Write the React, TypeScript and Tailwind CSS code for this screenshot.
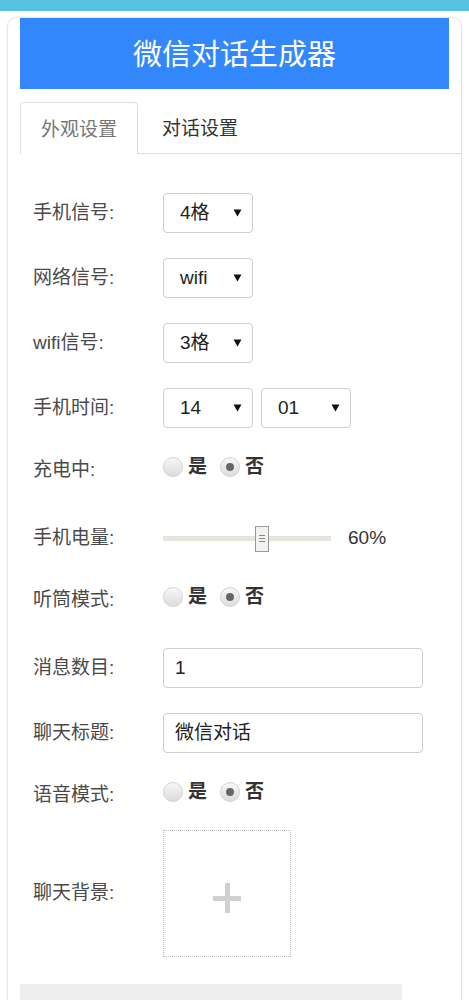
import React from 'react'

const font = { fontFamily: '"Liberation Sans", "Noto Sans CJK SC", sans-serif' }

function Arrow() {
  return (
    <svg width="9" height="8" viewBox="0 0 9 8" className="shrink-0">
      <path d="M0.5 0.5 H8.5 L4.5 7.5 Z" fill="#111" />
    </svg>
  )
}

function Select({ value }: { value: string }) {
  return (
    <div className="flex h-[40px] w-[90px] items-center justify-between rounded-[4px] border border-[#cfcfcf] bg-white pl-[16px] pr-[10px] text-[19px] text-[#222]">
      <span>{value}</span>
      <Arrow />
    </div>
  )
}

function Radio({ checked, label }: { checked?: boolean; label: string }) {
  return (
    <div className="flex items-center gap-[5px]">
      <span className="flex h-[20px] w-[20px] items-center justify-center rounded-full border border-[#d2d2d2] bg-gradient-to-b from-[#f7f7f7] to-[#dcdcdc]">
        {checked && <span className="h-[8px] w-[8px] rounded-full bg-[#666]" />}
      </span>
      <span className="text-[19px] font-bold text-[#333]">{label}</span>
    </div>
  )
}

function RadioPair() {
  return (
    <div className="mb-[6px] flex items-center gap-[13px]">
      <Radio label="是" />
      <Radio checked label="否" />
    </div>
  )
}

function Row({
  label,
  className,
  children,
}: {
  label: string
  className?: string
  children: React.ReactNode
}) {
  return (
    <div className={`flex items-center ${className ?? ''}`}>
      <div className="w-[130px] shrink-0 text-[19px] text-[#4a4a4a]">{label}</div>
      {children}
    </div>
  )
}

export default function App() {
  return (
    <div className="min-h-screen bg-white" style={font}>
      <div className="h-[11px] bg-[#56c3e3]" />

      <div className="ml-[7px] mt-[6px] w-[455px] rounded-[10px] border border-[#e6e6e6] px-[12px] shadow-[0_0_3px_rgba(0,0,0,0.06)]">
        <div className="flex h-[71px] items-center justify-center bg-[#3387fc] pt-[5px] text-[29px] text-white">
          微信对话生成器
        </div>

        {/* 选项卡 */}
        <div className="-mr-[12px] mt-[13px] flex h-[52px] border-b border-[#dddddd]">
          <div className="-mb-px flex h-[52px] items-center rounded-t-[4px] border border-b-0 border-[#dddddd] bg-white px-[20px] pt-[3px] text-[19px] text-[#777]">
            外观设置
          </div>
          <div className="ml-[4px] flex items-center px-[20px] pt-[3px] text-[19px] text-[#333]">
            对话设置
          </div>
        </div>

        <div className="pl-[13px] pt-[39px]">
          <Row label="手机信号:" className="h-[40px]">
            <Select value="4格" />
          </Row>
          <Row label="网络信号:" className="mt-[25px] h-[40px]">
            <Select value="wifi" />
          </Row>
          <Row label="wifi信号:" className="mt-[25px] h-[40px]">
            <Select value="3格" />
          </Row>
          <Row label="手机时间:" className="mt-[25px] h-[40px]">
            <div className="flex gap-[8px]">
              <Select value="14" />
              <Select value="01" />
            </div>
          </Row>
          <Row label="充电中:" className="mt-[22px] h-[40px]">
            <RadioPair />
          </Row>
          <Row label="手机电量:" className="mt-[28px] h-[40px]">
            <div className="relative h-[5px] w-[168px] bg-[#e6e5dd]">
              <div className="absolute left-[92px] top-[-10px] flex h-[26px] w-[14px] flex-col items-center justify-center gap-[2px] border border-[#9a9a9a] bg-[#f2f2ee]">
                <span className="h-px w-[6px] bg-[#888]" />
                <span className="h-px w-[6px] bg-[#888]" />
                <span className="h-px w-[6px] bg-[#888]" />
              </div>
            </div>
            <span className="ml-[17px] text-[19px] text-[#333]">60%</span>
          </Row>
          <Row label="听筒模式:" className="mt-[22px] h-[40px]">
            <RadioPair />
          </Row>
          <Row label="消息数目:" className="mt-[28px] h-[40px]">
            <div className="flex h-[40px] w-[260px] items-center rounded-[4px] border border-[#cfcfcf] px-[11px] text-[19px] text-[#222]">
              1
            </div>
          </Row>
          <Row label="聊天标题:" className="mt-[25px] h-[40px]">
            <div className="flex h-[40px] w-[260px] items-center rounded-[4px] border border-[#cfcfcf] px-[11px] text-[19px] text-[#222]">
              微信对话
            </div>
          </Row>
          <Row label="语音模式:" className="mt-[22px] h-[40px]">
            <RadioPair />
          </Row>
          <Row label="聊天背景:" className="mt-[15px] h-[127px]">
            <div className="flex h-[127px] w-[128px] items-center justify-center border border-dotted border-[#bbbbbb]">
              <div className="relative mt-[8px] h-[30px] w-[28px]">
                <span className="absolute left-0 top-[13px] h-[5px] w-[28px] bg-[#d0d0d0]" />
                <span className="absolute left-[12px] top-0 h-[30px] w-[5px] bg-[#d0d0d0]" />
              </div>
            </div>
          </Row>
        </div>

        <div className="mt-[27px] h-[50px] w-[382px] bg-[#eeeeee]" />
      </div>
    </div>
  )
}
